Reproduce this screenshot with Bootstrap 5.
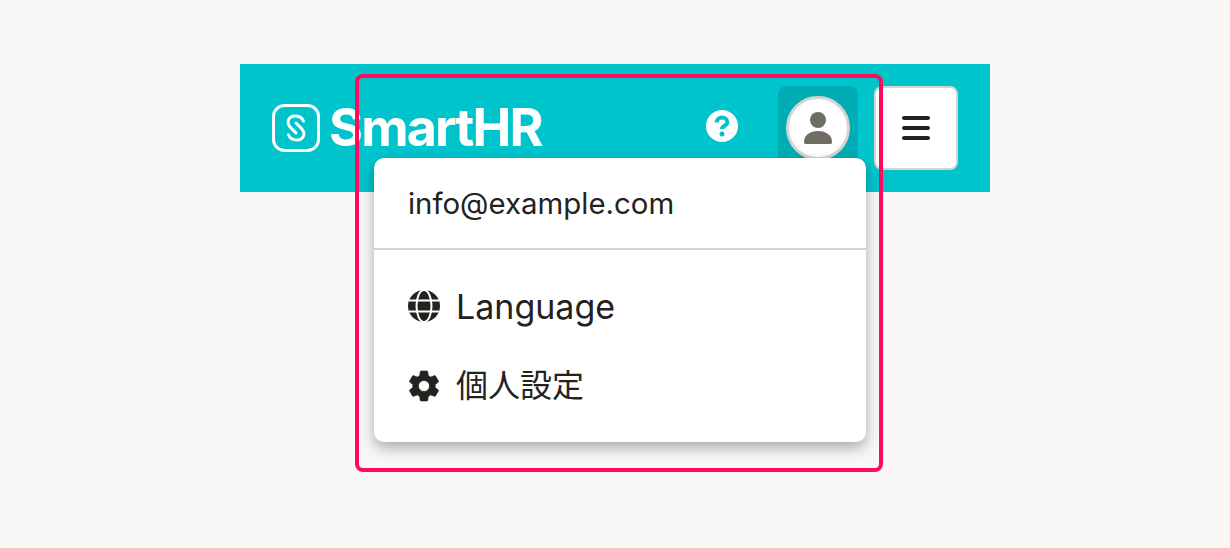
<!DOCTYPE html>
<html lang="ja">
<head>
  <meta charset="UTF-8">
  <title>SmartHR header</title>
  <meta name="viewport" content="width=device-width, initial-scale=1">
  <link href="https://cdn.jsdelivr.net/npm/bootstrap@5.3.3/dist/css/bootstrap.min.css" rel="stylesheet">
  <style>
    body {
      background: #f8f7f6;
      font-family: Inter, "Noto Sans CJK JP", sans-serif;
      color: #23221e;
      padding-top: 64px;
    }

    .stage {
      width: 750px;
    }

    .app-header {
      height: 128px;
      background: #00c4cc;
      padding: 22px 32px;
    }

    .logo-text {
      font-size: 52px;
      font-weight: 700;
      line-height: 48px;
      letter-spacing: -1.9px;
      margin-left: 9px;
      color: #fff;
    }

    .help-btn {
      width: 32px;
      height: 32px;
      margin-right: 40px;
      margin-top: -4px;
    }

    .avatar-btn {
      width: 80px;
      height: 84px;
      background: #00adb4;
      border-radius: 8px;
    }

    .avatar-face {
      width: 64px;
      height: 64px;
      background: #fff;
      border: 3px solid #d6d3d0;
      border-radius: 50%;
    }

    .menu-btn {
      width: 84px;
      height: 84px;
      margin-left: 16px;
      background: #fff;
      border: 2px solid #d6d3d0;
      border-radius: 8px;
      gap: 6px;
    }

    .menu-btn:hover {
      background: #fff;
    }

    .menu-bar {
      width: 28px;
      height: 4px;
      background: #23221e;
      border-radius: 2px;
    }

    .account-menu {
      top: 94px;
      left: 134px;
      width: 492px;
      height: 284px;
      background: #fff;
      border-radius: 10px;
      box-shadow: 0 6px 14px rgba(0, 0, 0, 0.3);
    }

    .account-mail {
      height: 92px;
      padding: 2px 34px 0;
      font-size: 29.4px;
      border-bottom: 2px solid #d6d3d0;
    }

    .account-list {
      padding-top: 16px;
    }

    .account-item {
      height: 80px;
      padding: 0 34px;
      font-size: 32px;
      gap: 16px;
    }

    .account-en {
      font-size: 34px;
    }

    .account-item svg {
      flex: none;
    }

    .pink-frame {
      top: 10px;
      left: 115px;
      width: 528px;
      height: 398px;
      border: 4px solid #ff0a5f;
      border-radius: 8px;
      pointer-events: none;
    }
  </style>
</head>
<body class="min-vh-100">
  <div class="stage position-relative mx-auto">
    <header class="app-header d-flex align-items-center">
      <div class="d-flex align-items-center">
        <svg width="48" height="48" viewBox="0 0 48 48" fill="none" stroke="#fff">
          <rect x="1.5" y="1.5" width="45" height="45" rx="11" stroke-width="3"/>
          <path d="M31.5 17C29 11 19 10 16.500 16C15 20 17 22 19 24L24 29M16.500 31C19 37 29 38 31.500 32C33 28 31 26 29 24L24 19" stroke-width="3" stroke-linecap="round"/>
        </svg>
        <span class="logo-text">SmartHR</span>
      </div>
      <div class="d-flex align-items-center ms-auto">
        <svg class="help-btn" viewBox="0 0 32 32">
          <circle cx="16" cy="16" r="16" fill="#fff"/>
          <path d="M10.800 12.500c0-6.500 10.600-6.500 10.600-.2 0 3.400-5.400 3.500-5.400 6.700" fill="none" stroke="#00c4cc" stroke-width="4"/>
          <circle cx="16" cy="24" r="2.500" fill="#00c4cc"/>
        </svg>
        <div class="avatar-btn d-flex align-items-center justify-content-center">
          <div class="avatar-face d-flex align-items-center justify-content-center">
            <svg width="28" height="32" viewBox="0 0 28 32" fill="#706d65">
              <circle cx="14" cy="8" r="8"/>
              <path d="M0 30c0-7 6-11 14-11s14 4 14 11c0 1.500-.5 2-2 2H2c-1.500 0-2-.5-2-2z"/>
            </svg>
          </div>
        </div>
        <button class="btn menu-btn d-flex flex-column align-items-center justify-content-center p-0" type="button" aria-label="Menu">
          <span class="menu-bar d-block"></span>
          <span class="menu-bar d-block"></span>
          <span class="menu-bar d-block"></span>
        </button>
      </div>
    </header>

    <div class="account-menu position-absolute">
      <div class="account-mail d-flex align-items-center">info@example.com</div>
      <ul class="account-list list-unstyled m-0">
        <li class="account-item d-flex align-items-center">
          <svg width="32" height="32" viewBox="0 0 32 32">
            <circle cx="16" cy="16" r="16" fill="#23221e"/>
            <g fill="none" stroke="#fff" stroke-width="2">
              <ellipse cx="16" cy="16" rx="7.500" ry="16"/>
              <path d="M1 10.500h30M1 21.500h30"/>
            </g>
          </svg>
          <span class="account-en">Language</span>
        </li>
        <li class="account-item d-flex align-items-center">
          <svg width="32" height="32" viewBox="1.700 1.700 20.600 20.600" fill="#23221e" stroke="#23221e" stroke-width=".5" stroke-linejoin="round">
            <path fill-rule="evenodd" d="M19.140 12.940c.04-.3.06-.61.06-.94 0-.32-.02-.64-.07-.94l2.030-1.580c.18-.14.23-.41.12-.61l-1.920-3.320c-.12-.22-.37-.29-.59-.22l-2.390.96c-.5-.38-1.030-.7-1.620-.94l-.36-2.540c-.04-.24-.24-.41-.48-.41h-3.840c-.24 0-.43.17-.47.41l-.36 2.540c-.59.24-1.130.57-1.620.94l-2.390-.96c-.22-.08-.47 0-.59.22L2.740 8.870c-.12.21-.08.47.12.61l2.030 1.580c-.05.3-.09.63-.09.94s.02.64.07.94l-2.030 1.580c-.18.14-.23.41-.12.61l1.920 3.320c.12.22.37.29.59.22l2.390-.96c.5.38 1.030.7 1.620.94l.36 2.540c.05.24.24.41.48.41h3.840c.24 0 .44-.17.47-.41l.36-2.540c.59-.24 1.130-.56 1.620-.94l2.390.96c.22.08.47 0 .59-.22l1.920-3.320c.12-.22.07-.47-.12-.61l-2.010-1.580zM12 15.600c-1.980 0-3.600-1.620-3.600-3.600s1.620-3.600 3.600-3.600 3.600 1.620 3.600 3.600-1.620 3.600-3.600 3.600z"/>
          </svg>
          個人設定
        </li>
      </ul>
    </div>

    <div class="pink-frame position-absolute"></div>
  </div>

  <script src="https://cdn.jsdelivr.net/npm/bootstrap@5.3.3/dist/js/bootstrap.bundle.min.js"></script>
</body>
</html>
